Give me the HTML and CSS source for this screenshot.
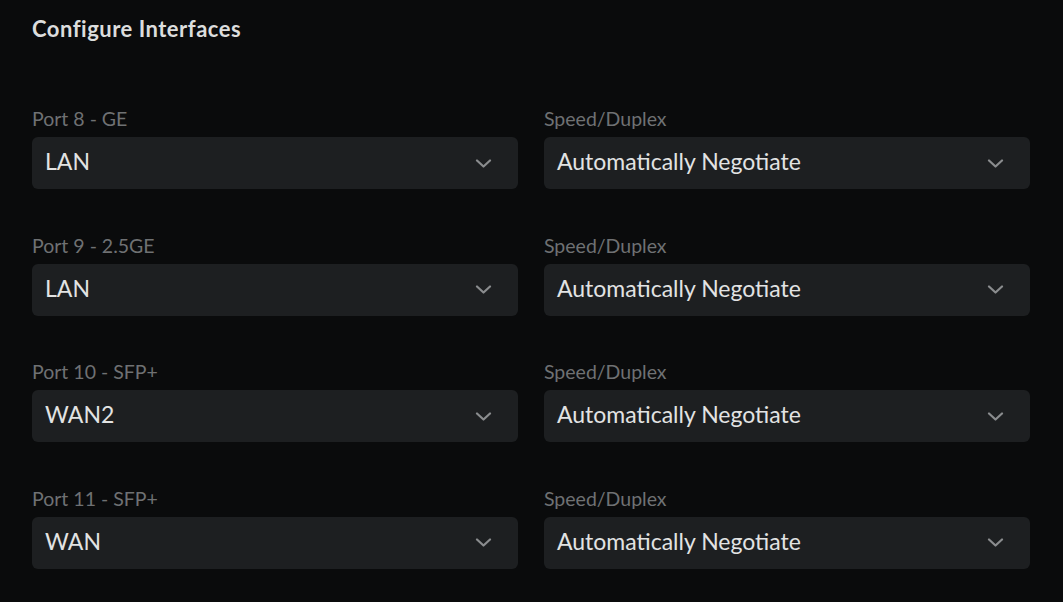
FILE: index.html
```html
<!DOCTYPE html>
<html lang="en">
<head>
    <meta charset="UTF-8">
    <title>Configure Interfaces</title>
    <link rel="stylesheet" href="styles.css">
</head>
<body>
<div id="container">
    <div class="title">Configure Interfaces</div>
    <div class="ports">
        <div class="field">
            <div class="label">Port 8 - GE</div>
            <div class="select"><span>LAN</span><svg class="chevron" viewBox="0 0 16 9"><path d="M1.5 1.5 L8 7.5 L14.5 1.5"/></svg></div>
        </div>
        <div class="field">
            <div class="label">Speed/Duplex</div>
            <div class="select"><span>Automatically Negotiate</span><svg class="chevron" viewBox="0 0 16 9"><path d="M1.5 1.5 L8 7.5 L14.5 1.5"/></svg></div>
        </div>
        <div class="field">
            <div class="label">Port 9 - 2.5GE</div>
            <div class="select"><span>LAN</span><svg class="chevron" viewBox="0 0 16 9"><path d="M1.5 1.5 L8 7.5 L14.5 1.5"/></svg></div>
        </div>
        <div class="field">
            <div class="label">Speed/Duplex</div>
            <div class="select"><span>Automatically Negotiate</span><svg class="chevron" viewBox="0 0 16 9"><path d="M1.5 1.5 L8 7.5 L14.5 1.5"/></svg></div>
        </div>
        <div class="field">
            <div class="label">Port 10 - SFP+</div>
            <div class="select"><span>WAN2</span><svg class="chevron" viewBox="0 0 16 9"><path d="M1.5 1.5 L8 7.5 L14.5 1.5"/></svg></div>
        </div>
        <div class="field">
            <div class="label">Speed/Duplex</div>
            <div class="select"><span>Automatically Negotiate</span><svg class="chevron" viewBox="0 0 16 9"><path d="M1.5 1.5 L8 7.5 L14.5 1.5"/></svg></div>
        </div>
        <div class="field">
            <div class="label">Port 11 - SFP+</div>
            <div class="select"><span>WAN</span><svg class="chevron" viewBox="0 0 16 9"><path d="M1.5 1.5 L8 7.5 L14.5 1.5"/></svg></div>
        </div>
        <div class="field">
            <div class="label">Speed/Duplex</div>
            <div class="select"><span>Automatically Negotiate</span><svg class="chevron" viewBox="0 0 16 9"><path d="M1.5 1.5 L8 7.5 L14.5 1.5"/></svg></div>
        </div>
    </div>
</div>
</body>
</html>
```

FILE: styles.css
```css
html, body {
    margin: 0;
    padding: 0;
    background-color: #0a0b0c;
    font-family: Lato, "Liberation Sans", sans-serif;
}

#container {
    padding: 17px 33px 0 32px;
}

.title {
    font-size: 22px;
    line-height: 24px;
    font-weight: bold;
    letter-spacing: 0.5px;
    color: #dcdddd;
}

.ports {
    display: grid;
    grid-template-columns: 1fr 1fr;
    column-gap: 26px;
    row-gap: 45.5px;
    margin-top: 67px;
}

.label {
    font-size: 19.5px;
    line-height: 22px;
    color: #6f7173;
    margin-bottom: 7px;
}

.select {
    display: flex;
    align-items: center;
    justify-content: space-between;
    height: 52px;
    padding: 0 26px 0 13px;
    background-color: #1d1f21;
    border-radius: 6px;
    font-size: 23px;
    color: #e2e3e3;
}

.select span {
    padding-bottom: 4px;
}

.chevron {
    width: 17px;
    height: 9px;
    fill: none;
    stroke: #8a8c8e;
    stroke-width: 2.2;
    stroke-linecap: round;
    stroke-linejoin: round;
}
```
